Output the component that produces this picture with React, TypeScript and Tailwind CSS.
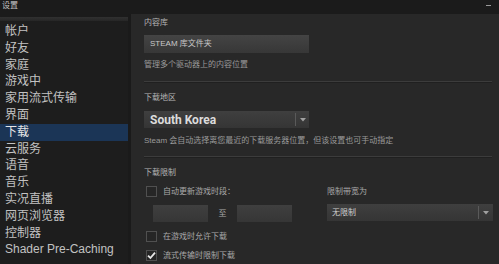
import React from "react";

const cjk = { fontFamily: '"Liberation Sans", "Noto Sans CJK SC", sans-serif' };

const items = [
  "帐户",
  "好友",
  "家庭",
  "游戏中",
  "家用流式传输",
  "界面",
  "下载",
  "云服务",
  "语音",
  "音乐",
  "实况直播",
  "网页浏览器",
  "控制器",
  "Shader Pre-Caching",
];

function Sep() {
  return (
    <div className="flex flex-col mr-[7px]">
      <div className="h-px bg-[#3c3c3c]" />
      <div className="h-px bg-[#202020]" />
    </div>
  );
}

function Check({ checked, label }: { checked?: boolean; label: string }) {
  return (
    <div className="flex items-center h-[11px] ml-[2px]">
      <div className="w-[11px] h-[11px] border border-[#505050] bg-[#262626] flex items-center justify-center">
        {checked && (
          <svg width="9" height="9" viewBox="0 0 9 9">
            <path d="M1 4.6 L3.4 7 L8 1.6" stroke="#e8e8e8" strokeWidth="1.8" fill="none" />
          </svg>
        )}
      </div>
      <span className="ml-[6px] text-[8px] leading-[10px] text-[#a9a9a9]">{label}</span>
    </div>
  );
}

function Arrow() {
  return (
    <svg width="6" height="4" viewBox="0 0 6 4">
      <path d="M0 0 L6 0 L3 3.5 Z" fill="#a0a0a0" />
    </svg>
  );
}

export default function App() {
  return (
    <div className="w-[499px] h-[264px] bg-[#1b1b1b] flex flex-col overflow-hidden" style={cjk}>
      <div className="h-[14px] flex items-start justify-between px-[2px] shrink-0">
        <span className="text-[8px] leading-[11px] text-[#c4c4c4]">设置</span>
        <div className="w-[5px] h-px bg-[#9a9a9a] mt-[5px] mr-[6px]" />
      </div>
      <div className="flex flex-1 min-h-0">
        <div className="w-[128px] shrink-0 flex flex-col bg-[#1b1b1b]">
          <div className="h-[3px]" />
          <div className="h-[4px] bg-gradient-to-b from-[#303030] to-[#262626]" />
          <div className="pt-[2px] flex flex-col bg-[#1d1d1d] flex-1">
            {items.map((t) => (
              <div
                key={t}
                className={
                  "h-[16.8px] leading-[16.8px] pl-[5px] text-[12px] whitespace-nowrap " +
                  (t === "下载" ? "bg-[#1b3556] text-[#e6e6e6]" : "text-[#c2c2c2]")
                }
              >
                {t}
              </div>
            ))}
          </div>
        </div>
        <div className="w-[3px] bg-[#1a1a1a] shrink-0" />
        <div className="flex-1 bg-[#282828] pl-[13px] pt-[4px] flex flex-col">
          <div className="text-[8px] leading-[10px] text-[#b4b4b4]">内容库</div>
          <div className="mt-[7px] w-[165px] h-[18px] bg-gradient-to-b from-[#444444] to-[#373737] flex items-center pl-[6px]">
            <span className="text-[8px] text-[#c8c8c8]">STEAM 库文件夹</span>
          </div>
          <div className="mt-[7px] text-[8px] leading-[10px] text-[#9a9a9a]">管理多个驱动器上的内容位置</div>
          <div className="mt-[11px]">
            <Sep />
          </div>
          <div className="mt-[10px] text-[8px] leading-[10px] text-[#b4b4b4]">下载地区</div>
          <div className="mt-[8px] w-[165px] h-[17px] bg-gradient-to-b from-[#3f3f3f] to-[#353535] flex items-center">
            <span
              className="pl-[6px] flex-1 text-[12px] font-bold text-[#dcdcdc]"
              style={{ fontFamily: "Roboto, sans-serif" }}
            >
              South Korea
            </span>
            <div className="w-px h-[13px] bg-[#5a5a5a]" />
            <div className="w-[13px] flex items-center justify-center">
              <Arrow />
            </div>
          </div>
          <div className="mt-[8px] text-[8px] leading-[10px] text-[#9a9a9a] whitespace-nowrap">
            Steam 会自动选择离您最近的下载服务器位置，但该设置也可手动指定
          </div>
          <div className="mt-[10px]">
            <Sep />
          </div>
          <div className="mt-[10px] text-[8px] leading-[10px] text-[#b4b4b4]">下载限制</div>
          <div className="flex">
            <div className="w-[183px] flex flex-col">
              <div className="mt-[8px]">
                <Check label="自动更新游戏时段：" />
              </div>
              <div className="mt-[8px] flex items-center ml-[9px]">
                <div className="w-[55px] h-[17px] bg-gradient-to-b from-[#3f3f3f] to-[#363636]" />
                <span className="w-[29px] text-center text-[8px] text-[#a9a9a9]">至</span>
                <div className="w-[55px] h-[17px] bg-gradient-to-b from-[#3f3f3f] to-[#363636]" />
              </div>
              <div className="mt-[9px]">
                <Check label="在游戏时允许下载" />
              </div>
              <div className="mt-[8px]">
                <Check checked label="流式传输时限制下载" />
              </div>
            </div>
            <div className="flex flex-col">
              <div className="mt-[9px] text-[8px] leading-[10px] text-[#a9a9a9]">限制带宽为</div>
              <div className="mt-[7px] w-[166px] h-[17px] bg-gradient-to-b from-[#3f3f3f] to-[#353535] flex items-center">
                <span className="pl-[5px] flex-1 text-[8px] text-[#cfcfcf]">无限制</span>
                <div className="w-px h-[13px] bg-[#5a5a5a]" />
                <div className="w-[14px] flex items-center justify-center">
                  <Arrow />
                </div>
              </div>
            </div>
          </div>
        </div>
      </div>
    </div>
  );
}
